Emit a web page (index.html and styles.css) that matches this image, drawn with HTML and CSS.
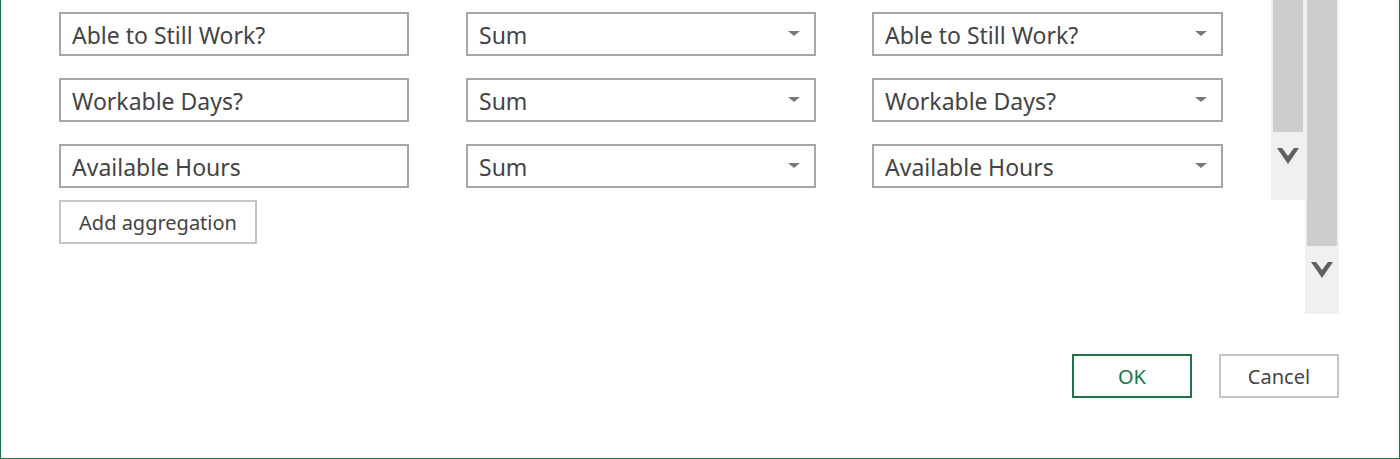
FILE: index.html
```html
<!DOCTYPE html>
<html lang="en">
<head>
<meta charset="utf-8">
<title>Group By</title>
<link rel="stylesheet" href="styles.css">
</head>
<body>
<div class="dialog">
  <div class="main">
    <div class="fields">
      <div class="fields-grid">
        <div class="box">Able to Still Work?</div>
        <div class="box select"><span>Sum</span><i class="caret"></i></div>
        <div class="box select col3"><span>Able to Still Work?</span><i class="caret"></i></div>

        <div class="box">Workable Days?</div>
        <div class="box select"><span>Sum</span><i class="caret"></i></div>
        <div class="box select col3"><span>Workable Days?</span><i class="caret"></i></div>

        <div class="box">Available Hours</div>
        <div class="box select"><span>Sum</span><i class="caret"></i></div>
        <div class="box select col3"><span>Available Hours</span><i class="caret"></i></div>
      </div>
      <button class="btn add">Add aggregation</button>
    </div>
    <div class="scrollbars">
      <div class="scrollbar short">
        <div class="thumb"></div>
        <div class="arrow"><svg width="24" height="19" viewBox="0 0 24 19"><polygon points="1,1 6,1 12,9 18,1 23,1 12,17" fill="#606060"/></svg></div>
      </div>
      <div class="scrollbar tall">
        <div class="thumb"></div>
        <div class="arrow"><svg width="24" height="19" viewBox="0 0 24 19"><polygon points="1,1 6,1 12,9 18,1 23,1 12,17" fill="#606060"/></svg></div>
      </div>
    </div>
  </div>
  <div class="footer">
    <button class="btn ok">OK</button>
    <button class="btn cancel">Cancel</button>
  </div>
</div>
</body>
</html>
```
FILE: styles.css
```css
html, body {
  margin: 0;
  padding: 0;
  background: #ffffff;
}
body {
  font-family: "Noto Sans", "Open Sans", sans-serif;
  color: #444444;
}
.dialog {
  box-sizing: border-box;
  width: 1400px;
  height: 459px;
  border-left: 1px solid #217346;
  border-right: 1px solid #217346;
  border-bottom: 1px solid #217346;
  display: flex;
  flex-direction: column;
}
.main {
  display: flex;
  align-items: flex-start;
  padding-left: 58px;
}
.fields {
  margin-top: 12px;
  display: flex;
  flex-direction: column;
  align-items: flex-start;
  gap: 12px;
}
.fields-grid {
  display: grid;
  grid-template-columns: 350px 350px 350px;
  column-gap: 57px;
  row-gap: 22px;
}
.col3 {
  margin-left: -1px;
}
.box {
  box-sizing: border-box;
  height: 44px;
  border: 2px solid #a6a6a6;
  padding: 2px 14px 0 11px;
  font-size: 23px;
  display: flex;
  align-items: center;
  justify-content: space-between;
  white-space: nowrap;
  color: #444444;
}
.caret {
  width: 0;
  height: 0;
  border-left: 6px solid transparent;
  border-right: 6px solid transparent;
  border-top: 5px solid #7a7a7a;
  margin-top: -4px;
}
.btn {
  box-sizing: border-box;
  height: 44px;
  background: #ffffff;
  font-family: "Noto Sans", "Open Sans", sans-serif;
  color: #444444;
  cursor: pointer;
  padding: 0;
}
.add {
  width: 198px;
  border: 2px solid #c6c6c6;
  font-size: 20px;
  padding-top: 1px;
}
.scrollbars {
  margin-left: 48px;
  display: flex;
  align-items: flex-start;
}
.scrollbar {
  width: 34px;
  background: #f0f0f0;
  display: flex;
  flex-direction: column;
  align-items: center;
}
.scrollbar .thumb {
  width: 30px;
  background: #cdcdcd;
}
.short { height: 200px; }
.short .thumb { height: 132px; }
.tall { height: 314px; }
.tall .thumb { height: 246px; }
.arrow {
  margin-top: 15px;
  height: 19px;
  line-height: 0;
}
.footer {
  margin-top: auto;
  display: flex;
  justify-content: flex-end;
  gap: 27px;
  padding: 0 60px 60px 0;
}
.ok, .cancel {
  width: 120px;
  font-size: 20px;
  padding-top: 1px;
}
.ok {
  border: 2px solid #217346;
  color: #217346;
}
.cancel {
  border: 2px solid #c6c6c6;
}
```
